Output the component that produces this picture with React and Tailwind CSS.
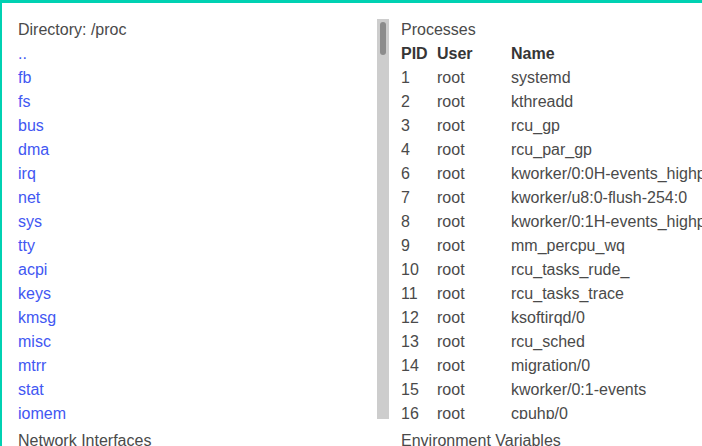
import React from 'react';

const ENTRIES = ['..', 'fb', 'fs', 'bus', 'dma', 'irq', 'net', 'sys', 'tty', 'acpi', 'keys', 'kmsg', 'misc', 'mtrr', 'stat', 'iomem', 'swaps', 'kcore', 'locks'];

const PROCESSES = [
  [1, 'root', 'systemd'],
  [2, 'root', 'kthreadd'],
  [3, 'root', 'rcu_gp'],
  [4, 'root', 'rcu_par_gp'],
  [6, 'root', 'kworker/0:0H-events_highpri'],
  [7, 'root', 'kworker/u8:0-flush-254:0'],
  [8, 'root', 'kworker/0:1H-events_highpri'],
  [9, 'root', 'mm_percpu_wq'],
  [10, 'root', 'rcu_tasks_rude_'],
  [11, 'root', 'rcu_tasks_trace'],
  [12, 'root', 'ksoftirqd/0'],
  [13, 'root', 'rcu_sched'],
  [14, 'root', 'migration/0'],
  [15, 'root', 'kworker/0:1-events'],
  [16, 'root', 'cpuhp/0'],
  [17, 'root', 'kdevtmpfs'],
];

export default function App() {
  return (
    <div className="h-[446px] w-[702px] overflow-hidden border-l-2 border-t-[3px] border-[#00d1b2] bg-white font-['Liberation_Sans',Arial,sans-serif] text-[16px] leading-[24px] text-[#4a4a4a]">
      <div className="grid grid-cols-[371px_400px] gap-x-[12px] gap-y-[10px] pl-4 pt-[15px]">
        {/* directory listing */}
        <div className="relative h-[401px] overflow-hidden">
          <div>Directory: /proc</div>
          <ul>
            {ENTRIES.map((e) => (
              <li key={e}>
                <a href="#" className="text-[#4257f2]">{e}</a>
              </li>
            ))}
          </ul>
          <div className="absolute bottom-0 right-0 top-[1px] w-[12px] bg-[#cdcdcd]">
            <div className="ml-[3px] mt-[3px] h-[33px] w-[6px] rounded-full bg-[#8c8c8c]" />
          </div>
        </div>

        {/* processes */}
        <div className="h-[401px] overflow-hidden">
          <div>Processes</div>
          <table className="text-left">
            <thead className="text-[#363636]">
              <tr>
                <th className="w-[36px] p-0 font-bold">PID</th>
                <th className="w-[74px] p-0 font-bold">User</th>
                <th className="p-0 font-bold">Name</th>
              </tr>
            </thead>
            <tbody>
              {PROCESSES.map(([pid, user, name]) => (
                <tr key={pid}>
                  <td className="p-0">{pid}</td>
                  <td className="p-0">{user}</td>
                  <td className="whitespace-nowrap p-0">{name}</td>
                </tr>
              ))}
            </tbody>
          </table>
        </div>

        <div>Network Interfaces</div>
        <div>Environment Variables</div>
      </div>
    </div>
  );
}
